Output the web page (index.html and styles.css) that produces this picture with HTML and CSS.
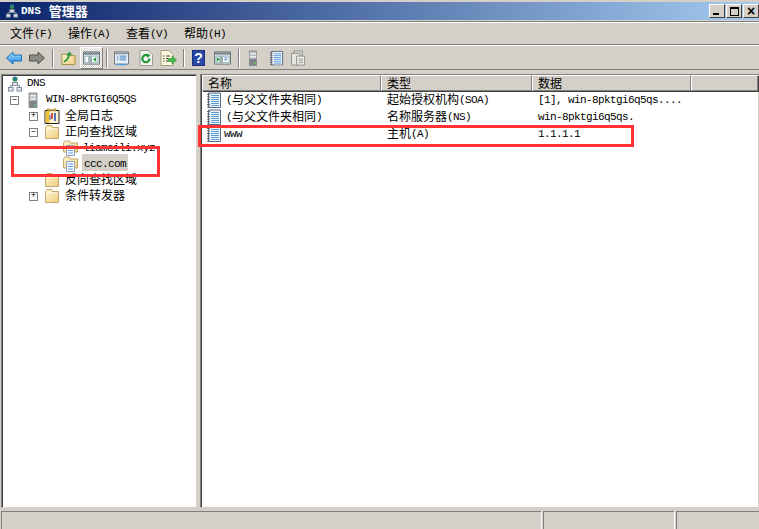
FILE: index.html
```html
<!DOCTYPE html>
<html lang="zh">
<head>
<meta charset="utf-8">
<title>DNS 管理器</title>
<link rel="stylesheet" href="styles.css">
</head>
<body>
<svg class="defs" width="0" height="0">
  <defs>
    <linearGradient id="fold" x1="0" y1="0" x2="1" y2="1"><stop offset="0" stop-color="#fff6d2"/><stop offset="1" stop-color="#f0cd80"/></linearGradient>
    <linearGradient id="blue" x1="0" y1="0" x2="0" y2="1"><stop offset="0" stop-color="#a8e4ff"/><stop offset="1" stop-color="#1c86e0"/></linearGradient>
    <symbol id="i-net" viewBox="0 0 16 16">
      <circle cx="8" cy="3" r="2.6" fill="#2f8f4f"/><path d="M6.500 1h3v2h-3z" fill="#2a6fc0"/>
      <path d="M8 6v3M3.500 12V9.500h9V12" fill="none" stroke="#7d8a9a"/>
      <rect x="5.500" y="6.500" width="5" height="3" fill="#e6e8ec" stroke="#7d8a9a"/>
      <rect x="1.500" y="11.500" width="4.500" height="3.500" fill="#e6e8ec" stroke="#7d8a9a"/>
      <rect x="10" y="11.500" width="4.500" height="3.500" fill="#e6e8ec" stroke="#7d8a9a"/>
    </symbol>
    <symbol id="i-server" viewBox="0 0 16 16">
      <path d="M4 1h8v15H4z" fill="#b4babd" stroke="#6a7176" stroke-width=".7"/>
      <path d="M5 3h6v1.400H5zM5 6h6v1.400H5z" fill="#eef0f1"/>
      <path d="M4.400 9h7.200v6.600H4.400z" fill="#7d8387"/><circle cx="10" cy="13" r=".9" fill="#5fd35f"/>
    </symbol>
    <symbol id="i-log" viewBox="0 0 16 16">
      <path d="M1 2.500h14v13H1z" fill="#fdf6d0" stroke="#222"/>
      <path d="M1.500 3h4v12h-4z" fill="#ecc23f"/>
      <path d="M3.500 .8c2 0 2.500 1 4.500 1s2-1 4-1v2h-8.500z" fill="#e7c64b" stroke="#8a7424" stroke-width=".6"/>
      <path d="M8 5v6" stroke="#c7242b" stroke-width="1.600"/><path d="M11 5v8" stroke="#2351b8" stroke-width="1.600"/><path d="M6 7v5" stroke="#2351b8"/>
    </symbol>
    <symbol id="i-folder" viewBox="0 0 16 16">
      <path d="M1.500 3.500 3 1.500h4.500l1 2h6v11h-13z" fill="url(#fold)" stroke="#c2a768"/>
      <path d="M2 5h12" stroke="#fffbe6"/>
    </symbol>
    <symbol id="i-zone" viewBox="0 0 16 16">
      <path d="M.5 3 2 1h4.500l1 2h7v9H.5z" fill="url(#fold)" stroke="#c2a768"/>
      <path d="M3.500 5.500h8v10h-8z" fill="#fbfdff" stroke="#8ea2bb"/>
      <path d="M5 8h5M5 10.500h5M5 13h5" stroke="#5f9ade"/>
    </symbol>
    <symbol id="i-record" viewBox="0 0 16 16">
      <path d="M2.500 1h12v14.500h-12z" fill="#f0f6fd" stroke="#53688a"/>
      <path d="M5 3.500h8M5 5.500h8M5 7.500h8M5 9.500h8M5 11.500h8M5 13.500h8" stroke="#5b9bd5"/>
      <path d="M1 2.500h3M1 5h3M1 7.500h3M1 10h3M1 12.500h3M1 15h3" stroke="#666"/>
    </symbol>
    <symbol id="i-window" viewBox="0 0 18 16">
      <path d="M.5 1.500h17v13H.5z" fill="#eef3f6" stroke="#68707a"/>
      <path d="M1 2h16v2.500H1z" fill="#7d8a92"/>
      <path d="M7.500 5v9" stroke="#68707a"/>
    </symbol>
  </defs>
</svg>

<div class="app">
  <header class="title">
    <svg class="ticon"><use href="#i-net"/></svg>
    <span class="tl">DNS</span>
    <span class="ttext">管理器</span>
    <div class="wbtns">
      <button class="wbtn"><span class="g-min"></span></button>
      <button class="wbtn"><span class="g-max"></span></button>
      <button class="wbtn g-x">×</button>
    </div>
  </header>

  <nav class="menu">
    <span class="mi">文件<span class="la">(F)</span></span>
    <span class="mi">操作<span class="la">(A)</span></span>
    <span class="mi">查看<span class="la">(V)</span></span>
    <span class="mi">帮助<span class="la">(H)</span></span>
  </nav>

  <div class="tools">
    <svg class="t t-back" viewBox="0 0 16 14"><path d="M.5 7 7 1v3h8.500v6H7v3z" fill="url(#blue)" stroke="#1b6fb8"/></svg>
    <svg class="t t-fwd" viewBox="0 0 16 14"><path d="M15.500 7 9 1v3H.5v6H9v3z" fill="#8a8a86" stroke="#4f4f4c"/></svg>
    <i class="sep s1"></i>
    <svg class="t t-up" viewBox="0 0 16 16"><path d="M1 4h5l1 1.500h8v9.500H1z" fill="url(#fold)" stroke="#a98c45"/><path d="M3 12C6 11 8 8 8.500 4.500" fill="none" stroke="#2c9c3e" stroke-width="2"/><path d="M5.500 5 9 1l3 4z" fill="#2c9c3e"/></svg>
    <span class="checked"><svg class="t t-win" viewBox="0 0 18 16"><use href="#i-window"/><path d="M2 6h4v7H2z" fill="#fff" stroke="#8aa"/><path d="M9 6h7v7H9z" fill="#fff" stroke="#8aa"/><path d="M14 7v5l-3.500-2.500z" fill="#1f9a3c"/></svg></span>
    <i class="sep s2"></i>
    <svg class="t t-prop" viewBox="0 0 16 16"><path d="M.5 1.500h15v13H.5z" fill="#eaf0f6" stroke="#68707a"/><path d="M1 2h14v2H1z" fill="#8c99a3"/><path d="M3 6h1.500M3 8h1.500M3 10h1.500M6 6h7M6 8h7M6 10h7" stroke="#3d77c0"/><path d="M3 15h10" stroke="#4aa0e0" stroke-width="1.500"/></svg>
    <svg class="t t-ref" viewBox="0 0 14 16"><path d="M1 .5h8l4.500 4v11H1z" fill="#f4f6f0" stroke="#9a9a94"/><path d="M10.500 8.500a3.600 3.600 0 1 1-1.200-2.600" fill="none" stroke="#25983a" stroke-width="2.200"/><path d="M7.500 3.500 11.500 5 8.500 8z" fill="#25983a"/></svg>
    <svg class="t t-exp" viewBox="0 0 17 16"><path d="M1 .5h8l4 4v11H1z" fill="#fdf8de" stroke="#a59d80"/><path d="M3 6h1.500M3 8.500h1.500M3 11h1.500M6 6h4M6 8.500h2M6 11h2" stroke="#444"/><path d="M8 8.500h4V6l4.500 4-4.500 4v-2.500H8z" fill="#46b94b" stroke="#2a8a34" stroke-width=".6"/></svg>
    <i class="sep s3"></i>
    <span class="help">?</span>
    <svg class="t t-win2" viewBox="0 0 18 16"><use href="#i-window"/><path d="M2 6h4v7H2z" fill="#fff" stroke="#8aa"/><path d="M9 6h7v7H9z" fill="#fff" stroke="#8aa"/><path d="M3 7v5l3-2.500z" fill="#1f9a3c"/><path d="M11 8h3M11 10h3" stroke="#3d77c0"/></svg>
    <i class="sep s4"></i>
    <svg class="t t-srv" viewBox="4 0 8 16"><use href="#i-server" width="16" height="16"/></svg>
    <svg class="t t-rec" viewBox="0 0 16 16"><use href="#i-record"/></svg>
    <svg class="t t-copy" viewBox="0 0 16 16"><path d="M3 .5h9v11H3z" fill="#d8d8d4" stroke="#8e8e8a"/><path d="M.5 3h9v12.500H.5z" fill="#e4e4e0" stroke="#8e8e8a"/><path d="M6 6h8.500v9.500H6z" fill="#f1f1ee" stroke="#8e8e8a"/><path d="M8 9h5M8 11h5M8 13h5" stroke="#9a9a96"/></svg>
  </div>

  <main class="panes">
    <section class="tree">
      <div class="row r-root"><svg class="ic"><use href="#i-net"/></svg><span class="la txt">DNS</span></div>
      <div class="row r-srv"><b class="box">−</b><svg class="ic"><use href="#i-server"/></svg><span class="la txt">WIN-8PKTGI6Q5QS</span></div>
      <div class="row r-c"><b class="box">+</b><svg class="ic"><use href="#i-log"/></svg><span class="txt">全局日志</span></div>
      <div class="row r-c"><b class="box">−</b><svg class="ic"><use href="#i-folder"/></svg><span class="txt">正向查找区域</span></div>
      <div class="row r-leaf"><svg class="ic"><use href="#i-zone"/></svg><span class="la txt">liameili.xyz</span></div>
      <div class="row r-leaf"><svg class="ic"><use href="#i-zone"/></svg><span class="la txt sel">ccc.com</span></div>
      <div class="row r-c r-nobox"><svg class="ic"><use href="#i-folder"/></svg><span class="txt">反向查找区域</span></div>
      <div class="row r-c"><b class="box">+</b><svg class="ic"><use href="#i-folder"/></svg><span class="txt">条件转发器</span></div>
    </section>

    <section class="list">
      <div class="lhead">
        <span class="th c1">名称</span>
        <span class="th c2">类型</span>
        <span class="th c3">数据</span>
        <span class="th c4"></span>
      </div>
      <div class="lrow">
        <span class="cell c1"><svg class="ic"><use href="#i-record"/></svg><span><span class="la">(</span>与父文件夹相同<span class="la">)</span></span></span>
        <span class="cell c2"><span>起始授权机构<span class="la">(SOA)</span></span></span>
        <span class="cell c3 la">[1], win-8pktgi6q5qs....</span>
      </div>
      <div class="lrow">
        <span class="cell c1"><svg class="ic"><use href="#i-record"/></svg><span><span class="la">(</span>与父文件夹相同<span class="la">)</span></span></span>
        <span class="cell c2"><span>名称服务器<span class="la">(NS)</span></span></span>
        <span class="cell c3 la">win-8pktgi6q5qs.</span>
      </div>
      <div class="lrow">
        <span class="cell c1 www"><svg class="ic"><use href="#i-record"/></svg><span class="la">www</span></span>
        <span class="cell c2"><span>主机<span class="la">(A)</span></span></span>
        <span class="cell c3 la">1.1.1.1</span>
      </div>
    </section>
  </main>

  <footer class="status">
    <span class="sb sb1"></span><span class="sb sb2"></span><span class="sb sb3"></span>
  </footer>

  <div class="mark m-left"></div>
  <div class="mark m-right"></div>
</div>
</body>
</html>
```

FILE: styles.css
```css
* { box-sizing: border-box; }
html, body { margin: 0; padding: 0; }
body {
  width: 759px; height: 529px; overflow: hidden;
  background: #d4d0c8;
  font: 12px/16px "Noto Sans CJK SC", "Liberation Mono", sans-serif;
  color: #000;
}
.defs { position: absolute; }
.app { position: relative; width: 759px; height: 529px; display: flex; flex-direction: column; padding-top: 2px; }
.la { font-family: "Liberation Mono", "DejaVu Sans Mono", monospace; font-size: 11px; letter-spacing: -.6px; }
.mi .la, .cell span .la { vertical-align: 1px; }

.title {
  height: 18px; display: flex; align-items: center; padding-left: 5px;
  background: linear-gradient(90deg, #0a246a 0%, #a6caf0 100%);
  color: #fff; flex: none;
}
.ticon { width: 14px; height: 16px; }
.tl { margin-left: 2px; font-family: "Liberation Mono", monospace; font-size: 11px; font-weight: 700; }
.ttext { margin-left: 8px; font-size: 13px; font-weight: 700; line-height: 18px; }
.wbtns { margin-left: auto; display: flex; gap: 1px; }
.wbtn {
  width: 16px; height: 14px; padding: 0; background: #d4d0c8;
  border: 1px solid; border-color: #fff #404040 #404040 #fff; color: #000;
  font: 700 14px/11px "Liberation Sans", sans-serif; display: flex; align-items: center; justify-content: center;
}
.g-min { width: 6px; height: 2px; background: #000; align-self: flex-end; margin: 0 3px 2px 0; }
.g-max { width: 9px; height: 9px; border: 1px solid #000; border-top-width: 2px; }

.menu {
  height: 24px; flex: none; display: flex; align-items: center; padding-left: 10px;
  margin-top: 1px; border-top: 1px solid #808080; box-shadow: inset 0 1px 0 #fff;
  border-bottom: 1px solid #808080;
}
.mi { width: 58px; white-space: nowrap; }

.tools {
  height: 25px; flex: none; display: flex; align-items: center; padding-left: 6px;
  border-top: 1px solid #fff; border-bottom: 1px solid #808080;
}
.t { display: block; flex: none; }
.t-back { width: 16px; height: 14px; }
.t-fwd { width: 16px; height: 14px; margin-left: 7px; }
.sep { display: block; flex: none; width: 1px; height: 18px; background: #808080; box-shadow: 1px 0 0 #fff; }
.s1 { margin-left: 7px; }
.t-up { width: 15px; height: 16px; margin-left: 8px; }
.checked {
  flex: none; width: 23px; height: 22px; margin-left: 4px; display: flex; align-items: center; justify-content: center;
  border: 1px solid; border-color: #fff #808080 #808080 #fff;
  background: repeating-conic-gradient(#fff 0 25%, #d4d0c8 0 50%) 0 0 / 2px 2px;
}
.t-win { width: 17px; height: 16px; }
.s2 { margin-left: 3px; }
.t-prop { width: 15px; height: 16px; margin-left: 7px; }
.t-ref { width: 14px; height: 16px; margin-left: 10px; }
.t-exp { width: 17px; height: 16px; margin-left: 7px; }
.s3 { margin-left: 6px; }
.help {
  flex: none; width: 13px; height: 16px; margin-left: 8px; background: #2a48a8; color: #fff;
  font: 700 14px/14px "Liberation Sans", sans-serif; text-align: center; border: 1px solid #1b2f78;
}
.t-win2 { width: 17px; height: 16px; margin-left: 9px; }
.s4 { margin-left: 7px; }
.t-srv { width: 8px; height: 16px; margin-left: 10px; }
.t-rec { width: 15px; height: 16px; margin-left: 12px; }
.t-copy { width: 15px; height: 16px; margin-left: 7px; }

.panes { flex: none; height: 434px; margin-top: 4px; display: flex; gap: 3px; padding-left: 1px; }
.tree, .list {
  background: #fff; border: 1px solid; border-color: #808080 #d4d0c8 #d4d0c8 #808080;
  box-shadow: inset 1px 1px 0 #404040;
}
.tree { width: 196px; padding-top: 1px; flex: none; }
.list { flex: 1; min-width: 0; }

.row { height: 16px; display: flex; align-items: center; white-space: nowrap; }
.ic { width: 16px; height: 16px; flex: none; }
.box {
  flex: none; width: 9px; height: 9px; border: 1px solid #808080; background: #fff;
  font: 400 9px/7px "Liberation Mono", monospace; text-align: center; color: #000;
}
.r-root { padding-left: 5px; }
.r-root .txt { margin-left: 4px; margin-top: -2px; }
.r-srv { padding-left: 8px; }
.r-srv .ic { margin-left: 6px; }
.r-srv .txt { margin-left: 5px; margin-top: -2px; }
.r-c { padding-left: 27px; }
.r-c .ic { margin-left: 6px; }
.r-c .txt { margin-left: 5px; margin-top: -2px; }
.r-c.r-nobox { padding-left: 36px; }
.r-leaf { padding-left: 61px; }
.r-leaf .txt { margin-left: 4px; }
.r-leaf .sel { margin-left: 3px; margin-top: -3px; padding: 0 2px; height: 17px; line-height: 20px; background: #d4d0c8; }

.lhead { display: flex; height: 16px; margin-left: 1px; }
.th {
  flex: none; height: 16px; padding-left: 5px; line-height: 13px; background: #d4d0c8; white-space: nowrap;
  border: 1px solid; border-color: #fff #808080 #808080 #fff; box-shadow: 1px 1px 0 #404040;
}
.lhead .c1 { width: 179px; }
.lhead .c2 { width: 151px; }
.lhead .c3 { width: 159px; }
.lhead .c4 { flex: 1; }
.lrow { display: flex; height: 17px; margin-left: 1px; align-items: center; white-space: nowrap; }
.cell { flex: none; display: flex; align-items: center; }
.lrow .c1 { width: 179px; padding-left: 4px; gap: 4px; }
.lrow .c1.www { gap: 2px; }
.lrow .c2 { width: 151px; padding-left: 6px; }
.lrow .c3 { width: 250px; padding-left: 6px; }

.status { flex: 1; display: flex; gap: 2px; margin-top: 3px; padding: 0 0 0 1px; }
.sb { display: block; height: 100%; border-top: 1px solid #808080; border-left: 1px solid #808080; box-shadow: 1px 0 0 #fff; }
.sb1 { width: 540px; }
.sb2 { width: 131px; }
.sb3 { flex: 1; }

.mark { position: absolute; border: 3px solid #ff3333; pointer-events: none; }
.m-left { left: 11px; top: 146px; width: 149px; height: 31px; }
.m-right { left: 198px; top: 125px; width: 436px; height: 22px; }
```
